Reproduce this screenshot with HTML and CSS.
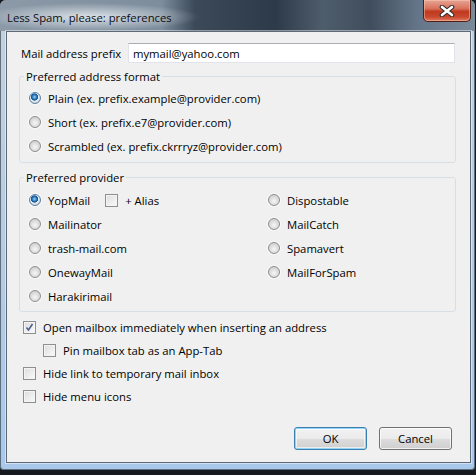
FILE: index.html
```html
<!DOCTYPE html>
<html lang="en">
<head>
    <meta charset="UTF-8">
    <meta name="viewport" content="width=device-width, initial-scale=1.0">
    <title>Less Spam, please: preferences</title>
    <link rel="stylesheet" href="styles.css">
</head>
<body>
    <div class="window">
        <div class="titlebar">
            <span class="title">Less Spam, please: preferences</span>
            <button class="close" aria-label="Close">
                <svg width="16" height="12" viewBox="0 0 16 12">
                    <path d="M3 2 L13 10 M13 2 L3 10" stroke="#2b2b2b" stroke-width="4.6" stroke-linecap="round"/>
                    <path d="M3 2 L13 10 M13 2 L3 10" stroke="#ffffff" stroke-width="2.6" stroke-linecap="round"/>
                </svg>
            </button>
        </div>

        <div class="client">
            <div class="prefix-row">
                <label for="prefix">Mail address prefix</label>
                <input id="prefix" type="text" value="mymail@yahoo.com">
            </div>

            <fieldset class="group format">
                <legend>Preferred address format</legend>
                <div class="opt"><span class="radio on"></span>Plain (ex. prefix.example@provider.com)</div>
                <div class="opt"><span class="radio"></span>Short (ex. prefix.e7@provider.com)</div>
                <div class="opt"><span class="radio"></span>Scrambled (ex. prefix.ckrrryz@provider.com)</div>
            </fieldset>

            <fieldset class="group provider">
                <legend>Preferred provider</legend>
                <div class="providers">
                    <div class="opt"><span class="radio on"></span>YopMail<span class="check alias"></span>+ Alias</div>
                    <div class="opt"><span class="radio"></span>Dispostable</div>
                    <div class="opt"><span class="radio"></span>Mailinator</div>
                    <div class="opt"><span class="radio"></span>MailCatch</div>
                    <div class="opt"><span class="radio"></span>trash-mail.com</div>
                    <div class="opt"><span class="radio"></span>Spamavert</div>
                    <div class="opt"><span class="radio"></span>OnewayMail</div>
                    <div class="opt"><span class="radio"></span>MailForSpam</div>
                    <div class="opt"><span class="radio"></span>Harakirimail</div>
                </div>
            </fieldset>

            <div class="checks">
                <div class="opt"><span class="check on"></span>Open mailbox immediately when inserting an address</div>
                <div class="opt sub"><span class="check"></span>Pin mailbox tab as an App-Tab</div>
                <div class="opt"><span class="check"></span>Hide link to temporary mail inbox</div>
                <div class="opt"><span class="check"></span>Hide menu icons</div>
            </div>

            <div class="buttons">
                <button class="btn default">OK</button>
                <button class="btn">Cancel</button>
            </div>
        </div>
    </div>
</body>
</html>
```

FILE: styles.css
```css
body {
    margin: 0;
    background-color: #16191d;
    font-family: "Open Sans", "Noto Sans", sans-serif;
    font-size: 11.3px;
    color: #000;
}
.window {
    width: 475px;
    height: 470px;
    display: flex;
    flex-direction: column;
    border-radius: 6px 6px 4px 4px;
    background: linear-gradient(to bottom, #c5d2de 0%, #b3cbe3 60%, #a9c8ea 100%);
    box-shadow: inset 0 0 0 1px rgba(40, 50, 60, 0.6);
    overflow: hidden;
}
.titlebar {
    height: 31px;
    flex: none;
    display: flex;
    align-items: flex-start;
    background:
        radial-gradient(ellipse 110px 14px at 90px 17px, rgba(235, 240, 245, 0.85), rgba(235, 240, 245, 0) 100%),
        linear-gradient(to right, #8c9aa8 0%, #7d8d9c 34%, #3b4959 41%, #2d3a49 58%, #4e5d6c 68%, #3f4d5c 78%, #66768a 88%, #7b8a99 100%);
}
.title {
    padding: 10px 0 0 7px;
    line-height: 15px;
    color: #0b0f14;
}
.close {
    margin-left: auto;
    margin-right: 4px;
    width: 48px;
    height: 22px;
    padding: 0;
    border: 1px solid #4b2019;
    border-top: none;
    border-radius: 0 0 5px 5px;
    background: linear-gradient(to bottom, #e6a594 0%, #d9735d 40%, #c0391f 55%, #c8482d 80%, #df7a5f 100%);
    box-shadow: inset 0 0 0 1px rgba(255, 210, 190, 0.45);
    display: flex;
    align-items: center;
    justify-content: center;
}
.client {
    flex: 1;
    margin: 0 4px 7px 6px;
    border: 1px solid #5e6a77;
    background-color: #f0f0f0;
    padding: 11px 14px 12px 12px;
    display: flex;
    flex-direction: column;
    box-shadow: 0 0 0 1px rgba(255, 255, 255, 0.45);
}
.prefix-row {
    display: flex;
    align-items: center;
    height: 20px;
    padding-left: 2px;
}
.prefix-row label {
    width: 107px;
}
.prefix-row input {
    flex: 1;
    height: 20px;
    box-sizing: border-box;
    margin: 0 1px 0 0;
    padding: 0 4px;
    border: 1px solid #e2e3ea;
    border-top-color: #abadb3;
    font: inherit;
    color: #000;
    background-color: #fff;
    outline: none;
}
.group {
    margin: 6px 0 0 0;
    min-width: 0;
    border: 1px solid #d5dfe5;
    border-radius: 3px;
    padding: 2px 0 4px 9px;
}
.group legend {
    margin-left: -5px;
    padding: 0 2px;
    line-height: 15px;
}
.provider {
    margin-top: 7px;
    padding-top: 3px;
    padding-bottom: 3px;
}
.opt {
    display: flex;
    align-items: center;
    height: 24px;
    white-space: nowrap;
}
.providers {
    display: grid;
    grid-template-columns: 239px 1fr;
}
.radio {
    width: 12px;
    height: 12px;
    box-sizing: border-box;
    border-radius: 50%;
    border: 1px solid #8d8f91;
    margin-right: 7px;
    background: radial-gradient(circle at 50% 60%, #f7f7f7 0, #e2e2e2 3px, #cfd0d1 6px);
    box-shadow: 0 0 0 1px rgba(255, 255, 255, 0.6);
}
.radio.on {
    border-color: #5a7fa5;
    background: radial-gradient(circle at 45% 40%, #a6d8f8 0, #3a8fd0 1.6px, #16508e 3.3px, #e7eef4 3.9px, #d0d4d8 6px);
}
.check {
    width: 13px;
    height: 13px;
    box-sizing: border-box;
    border: 1px solid #8e8f8f;
    margin-right: 7px;
    background: linear-gradient(135deg, #dcdcdc, #fbfbfb);
    box-shadow: inset 0 0 0 1px #f4f4f4;
}
.check.on {
    background:
        url("data:image/svg+xml,%3Csvg xmlns='http://www.w3.org/2000/svg' width='11' height='11'%3E%3Cpath d='M2.5 5.5 L4.5 8 L8.5 2' fill='none' stroke='%234a5f8f' stroke-width='1.6'/%3E%3C/svg%3E") center no-repeat,
        linear-gradient(135deg, #dcdcdc, #fbfbfb);
}
.check.alias {
    margin-left: 15px;
}
.checks {
    margin-top: 4px;
    padding-left: 4px;
}
.checks .opt {
    height: 23px;
}
.checks .sub {
    padding-left: 20px;
}
.buttons {
    margin-top: auto;
    display: flex;
    justify-content: flex-end;
    gap: 12px;
    padding-right: 4px;
}
.btn {
    width: 73px;
    height: 23px;
    padding: 0;
    font: inherit;
    color: #000;
    border: 1px solid #707070;
    border-radius: 3px;
    background: linear-gradient(to bottom, #f2f2f2 0%, #ebebeb 50%, #dddddd 51%, #cfcfcf 100%);
    box-shadow: inset 0 0 0 1px rgba(255, 255, 255, 0.75);
}
.btn.default {
    border-color: #3c7fb1;
    box-shadow: inset 0 0 0 1px #94d4f4, inset 0 0 0 2px rgba(255, 255, 255, 0.6);
}
```
